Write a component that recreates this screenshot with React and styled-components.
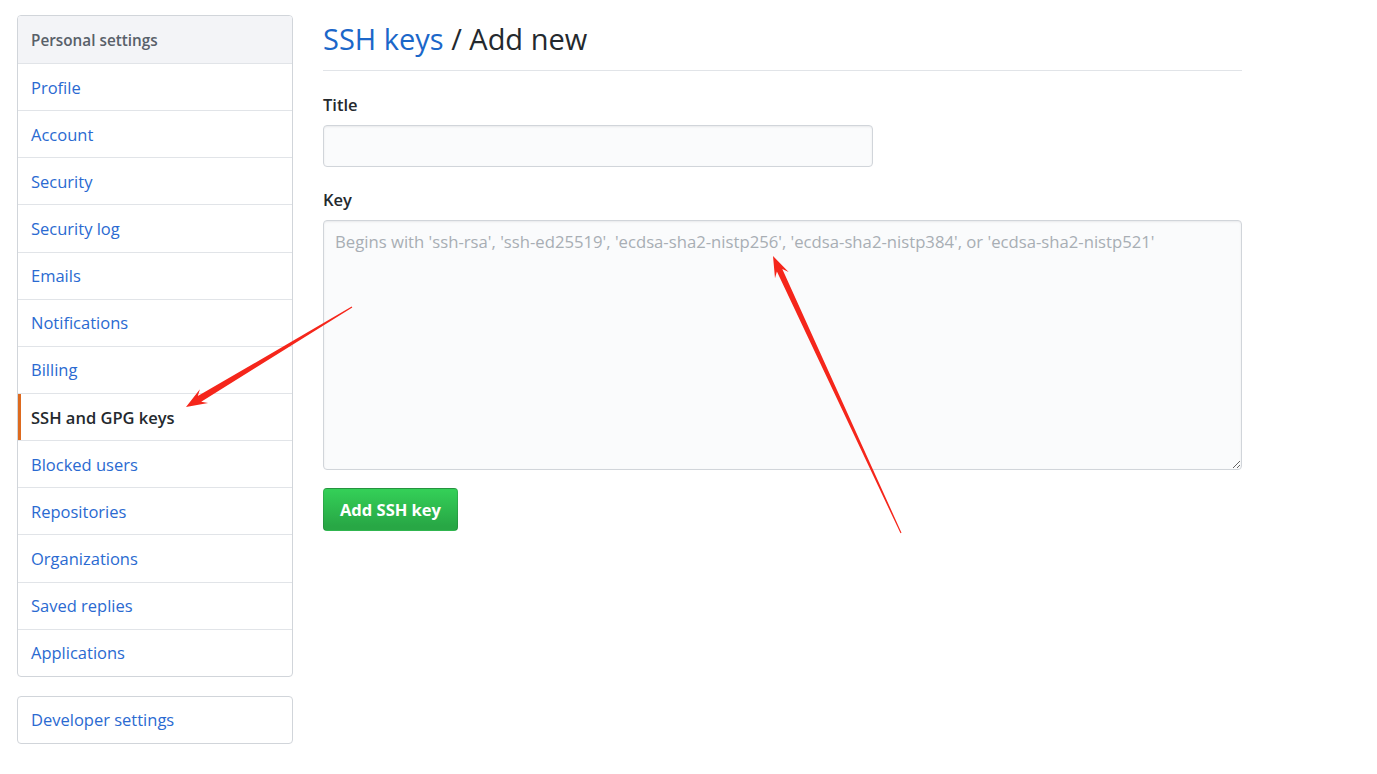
import React from "react";
import styled, { createGlobalStyle, css } from "styled-components";

const Global = createGlobalStyle`
  html, body { margin: 0; padding: 0; background: #fff; }
  body { font-family: "Open Sans", "Noto Sans", "Liberation Sans", sans-serif; color: #24292e; }
  * { box-sizing: border-box; }
`;

const Page = styled.div`
  position: relative;
  width: 1377px;
  height: 774px;
  overflow: hidden;
  display: flex;
  align-items: flex-start;
  gap: 30px;
  padding: 15px 0 0 17px;
`;

const Sidebar = styled.nav`
  width: 276px;
  flex: none;
  display: flex;
  flex-direction: column;
  gap: 19px;
`;

const Menu = styled.div`
  border: 1px solid #d1d5da;
  border-radius: 4px;
  overflow: hidden;
  display: flex;
  flex-direction: column;
`;

const MenuHeading = styled.div`
  height: 47px;
  display: flex;
  align-items: center;
  padding: 0 13px;
  background: #f3f4f7;
  font-size: 15.3px;
  font-weight: 600;
  color: #586069;
`;

const MenuItem = styled.a`
  height: ${(p) => (p.$first ? "46px" : "47.15px")};
  display: flex;
  align-items: center;
  padding: 0 13px;
  border-top: ${(p) => (p.$first ? "none" : "1px solid #e1e4e8")};
  font-size: 16.5px;
  color: #2a6ad1;
  text-decoration: none;
  position: relative;
  ${(p) =>
    p.$selected &&
    css`
      color: #24292e;
      font-weight: 600;
      &::before {
        content: "";
        position: absolute;
        left: 0;
        top: 0;
        bottom: 0;
        width: 3px;
        background: #dd6a1f;
      }
    `}
`;

const Main = styled.main`
  width: 919px;
  flex: none;
  display: flex;
  flex-direction: column;
`;

const Subhead = styled.div`
  padding-top: 1px;
  padding-bottom: 9px;
  border-bottom: 1px solid #e1e4e8;
  margin-bottom: 21px;
`;

const Heading = styled.h2`
  margin: 0;
  font-size: 29px;
  font-weight: 400;
  line-height: 45px;
  color: #24292e;
`;

const HeadLink = styled.a`
  color: #1b67c9;
  text-decoration: none;
`;

const Label = styled.label`
  display: block;
  font-size: 16.5px;
  font-weight: 600;
  line-height: 25px;
  margin-bottom: 8px;
  color: #24292e;
`;

const Field = styled.div`
  margin-bottom: ${(p) => p.$mb || 20}px;
`;

const inputBase = css`
  display: block;
  border: 1px solid #d1d5da;
  border-radius: 4px;
  background: #fafbfc;
  box-shadow: inset 0 1px 2px rgba(27, 31, 35, 0.075);
  font-family: inherit;
  font-size: 16.5px;
  color: #24292e;
  outline: none;
`;

const TextInput = styled.input`
  ${inputBase}
  width: 550px;
  height: 42px;
  padding: 0 12px;
`;

const TextArea = styled.textarea`
  ${inputBase}
  width: 919px;
  height: 250px;
  padding: 10px 11px;
  font-size: 16.7px;
  line-height: 22px;
  resize: vertical;
  &::placeholder { color: #a8aeb4; }
`;

const Button = styled.button`
  align-self: flex-start;
  width: 135px;
  height: 43px;
  border: 1px solid rgba(27, 31, 35, 0.15);
  border-radius: 4px;
  background: linear-gradient(-180deg, #34d058 0%, #28a745 90%);
  color: #fff;
  font-family: inherit;
  font-size: 16.5px;
  font-weight: 700;
  padding: 0;
`;

const Overlay = styled.svg`
  position: absolute;
  left: 0;
  top: 0;
  pointer-events: none;
`;

function arrowPoints(tail, tip, headLen, headW, shaftW) {
  const [tx, ty] = tail;
  const [px, py] = tip;
  const dx = px - tx;
  const dy = py - ty;
  const len = Math.hypot(dx, dy);
  const ux = dx / len;
  const uy = dy / len;
  const nx = -uy;
  const ny = ux;
  const bx = px - ux * headLen;
  const by = py - uy * headLen;
  const neckX = px - ux * (headLen * 0.75);
  const neckY = py - uy * (headLen * 0.75);
  const pts = [
    [tx + nx * 0.6, ty + ny * 0.6],
    [neckX + nx * shaftW / 2, neckY + ny * shaftW / 2],
    [bx + nx * headW / 2, by + ny * headW / 2],
    [px, py],
    [bx - nx * headW / 2, by - ny * headW / 2],
    [neckX - nx * shaftW / 2, neckY - ny * shaftW / 2],
    [tx - nx * 0.6, ty - ny * 0.6],
  ];
  return pts.map((p) => p.map((v) => v.toFixed(1)).join(",")).join(" ");
}

const items = [
  "Profile",
  "Account",
  "Security",
  "Security log",
  "Emails",
  "Notifications",
  "Billing",
  "SSH and GPG keys",
  "Blocked users",
  "Repositories",
  "Organizations",
  "Saved replies",
  "Applications",
];

export default function App() {
  return (
    <>
      <Global />
      <Page>
        <Sidebar>
          <Menu>
            <MenuHeading>Personal settings</MenuHeading>
            {items.map((it) => (
              <MenuItem key={it} $selected={it === "SSH and GPG keys"}>
                {it}
              </MenuItem>
            ))}
          </Menu>
          <Menu>
            <MenuItem $first>Developer settings</MenuItem>
          </Menu>
        </Sidebar>
        <Main>
          <Subhead>
            <Heading>
              <HeadLink>SSH keys</HeadLink> / Add new
            </Heading>
          </Subhead>
          <Field>
            <Label>Title</Label>
            <TextInput type="text" />
          </Field>
          <Field $mb={18}>
            <Label>Key</Label>
            <TextArea placeholder="Begins with 'ssh-rsa', 'ssh-ed25519', 'ecdsa-sha2-nistp256', 'ecdsa-sha2-nistp384', or 'ecdsa-sha2-nistp521'" />
          </Field>
          <Button>Add SSH key</Button>
        </Main>
        <Overlay width="1377" height="774" viewBox="0 0 1377 774">
          <polygon fill="#f5261b" points={arrowPoints([352, 307], [186, 407], 21, 16, 6.5)} />
          <polygon fill="#f5261b" points={arrowPoints([901, 533], [773, 256], 21, 15, 6)} />
        </Overlay>
      </Page>
    </>
  );
}
